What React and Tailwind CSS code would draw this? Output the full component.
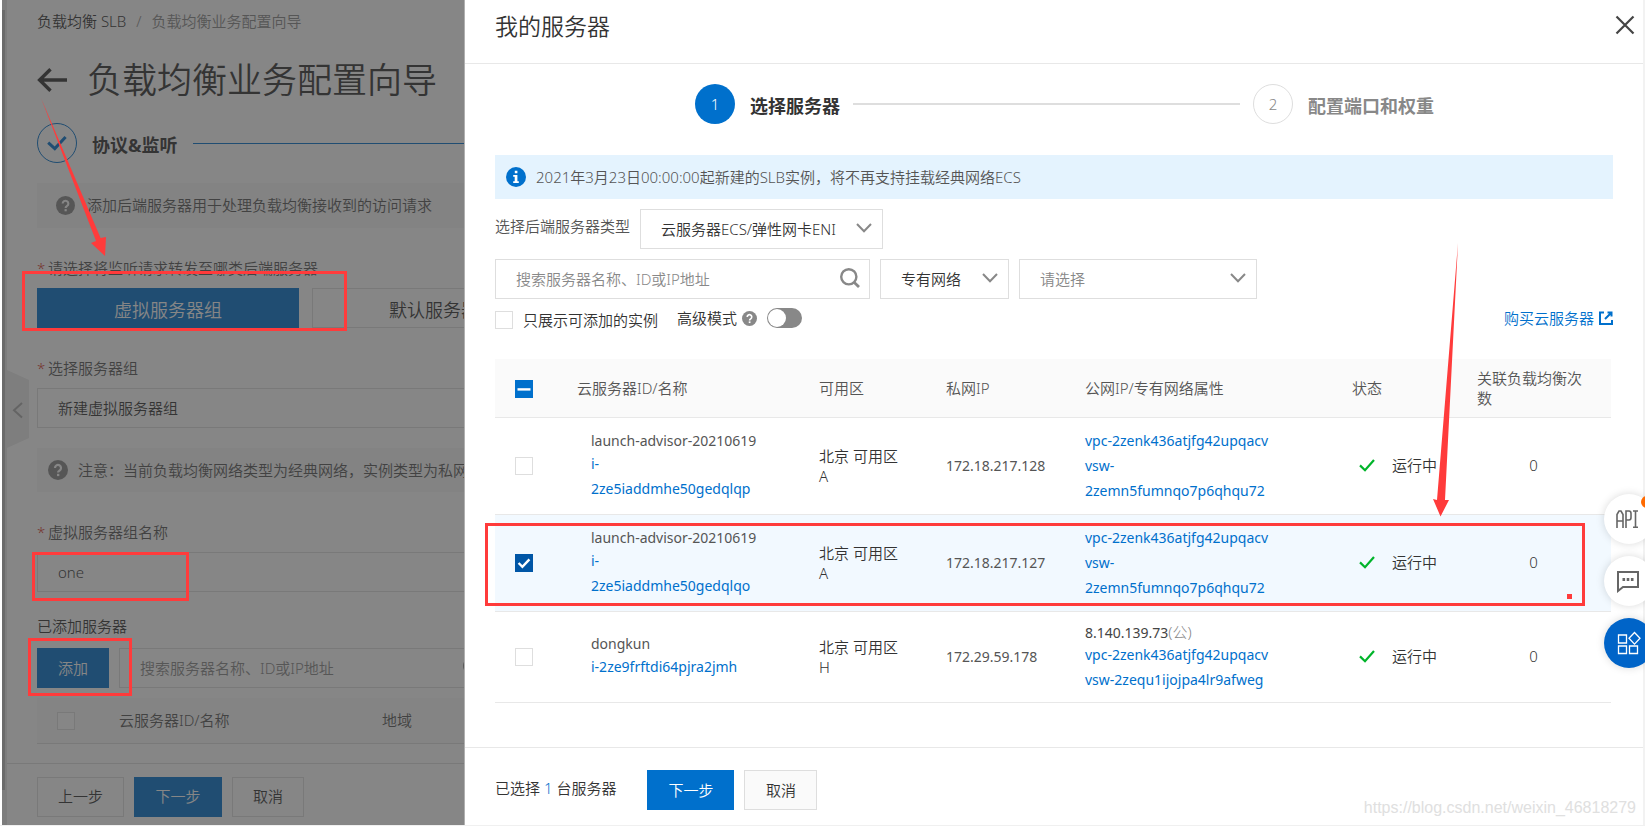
const servers = [
  {
    name: "launch-advisor-20210619",
    id: ["i-", "2ze5iaddmhe50gedqlqp"],
    zone: "北京 可用区 A",
    ip: "172.18.217.128",
    net: ["vpc-2zenk436atjfg42upqacv", "vsw-", "2zemn5fumnqo7p6qhqu72"],
    height: "h-[97px]",
  },
  {
    name: "launch-advisor-20210619",
    id: ["i-", "2ze5iaddmhe50gedqlqo"],
    zone: "北京 可用区 A",
    ip: "172.18.217.127",
    net: ["vpc-2zenk436atjfg42upqacv", "vsw-", "2zemn5fumnqo7p6qhqu72"],
    checked: true,
    height: "h-[97px]",
  },
  {
    name: "dongkun",
    id: ["i-2ze9frftdi64pjra2jmh"],
    zone: "北京 可用区 H",
    ip: "172.29.59.178",
    publicIp: "8.140.139.73",
    net: ["vpc-2zenk436atjfg42upqacv", "vsw-2zequ1ijojpa4lr9afweg"],
    height: "h-[91px]",
  },
];

function Chevron({ className }) {
  return (
    <svg viewBox="0 0 16 10" className={className} fill="none" stroke="#888" strokeWidth="2">
      <path d="M1 1l7 7.2L15 1" />
    </svg>
  );
}

function QuestionIcon({ className }) {
  return (
    <svg viewBox="0 0 20 20" className={className}>
      <circle cx="10" cy="10" r="10" fill="#888" />
      <path d="M7 8a3 3 0 1 1 4.6 2.5c-1 .7-1.5 1-1.5 2" fill="none" stroke="#fff" strokeWidth="2.2" />
      <rect x="9" y="13.8" width="2.3" height="2.3" fill="#fff" />
    </svg>
  );
}

function SearchIcon({ className }) {
  return (
    <svg viewBox="0 0 20 20" className={className} fill="none" stroke="#888" strokeWidth="2.4">
      <circle cx="8.8" cy="8.8" r="7.6" />
      <path d="M14 14.2l5 4.8" strokeWidth="2.8" />
    </svg>
  );
}

function Select({ id, className, value, muted }) {
  return (
    <span className={`relative inline-flex ${className}`}>
      <select
        id={id}
        aria-label={value}
        className={`h-10 w-full appearance-none border border-[#dedede] bg-white pl-5 pr-9 outline-none ${muted ? "text-[#888]" : "text-[#333]"}`}
      >
        <option>{value}</option>
      </select>
      <Chevron className="pointer-events-none absolute right-[11px] top-3.5 h-2.5 w-4" />
    </span>
  );
}

function Checkbox({ label, checked, mixed }) {
  return (
    <span className="relative inline-flex size-[18px]">
      <input
        type="checkbox"
        aria-label={label}
        defaultChecked={checked}
        className={`size-[18px] appearance-none border ${
          checked ? "border-[#0056a6] bg-[#0056a6]" : mixed ? "border-[#0070cc] bg-[#0070cc]" : "border-[#dedede] bg-white"
        }`}
      />
      {(checked || mixed) && (
        <svg viewBox="0 0 18 18" className="pointer-events-none absolute inset-0 size-[18px]" fill="none" stroke="#fff" strokeWidth="2.4">
          {mixed ? <path d="M2.5 9.4h13" /> : <path d="M3.6 9l3.8 3.8 7-7.4" />}
        </svg>
      )}
    </span>
  );
}

function RequiredLabel({ htmlFor, children, className }) {
  return (
    <label htmlFor={htmlFor} className={`flex h-5 items-center text-[#555] ${className}`}>
      <span className="w-[11px] text-[#d93026]">*</span>
      {children}
    </label>
  );
}

function Wizard() {
  return (
    <section className="relative flex w-[462px] shrink-0 overflow-hidden bg-white whitespace-nowrap">
      <div className="flex w-[5px] shrink-0 bg-[#e8e8e8]">
        <div className="mt-2.5 mb-[35px] w-[3px] bg-[#bbb]" />
      </div>
      <div className="flex w-[1200px] shrink-0 flex-col">
        <div className="flex flex-col pl-[30px]">
          <nav className="mt-[11px] flex h-5 items-center">
            <a href="#slb" className="text-[#333]">负载均衡 SLB</a>
            <span className="px-2.5 text-[#888]">/</span>
            <span className="text-[#888]">负载均衡业务配置向导</span>
          </nav>
          <div className="mt-[25px] flex h-12 items-center gap-5">
            <button aria-label="返回">
              <svg viewBox="0 0 30 24" className="h-6 w-[30px]" fill="none" stroke="#333" strokeWidth="3.4">
                <path d="M30 12H3M13.5 1.2L2.6 12l10.9 10.8" />
              </svg>
            </button>
            <h1 className="text-[35px] text-[#333]">负载均衡业务配置向导</h1>
          </div>
          <div className="mt-[19px] flex h-10 items-center gap-[15px]">
            <span className="flex size-10 items-center justify-center rounded-full border border-[#0070cc]">
              <svg viewBox="0 0 20 16" className="h-4 w-5" fill="none" stroke="#0070cc" strokeWidth="3">
                <path d="M1.2 7.6l6.6 6L18.6 2" />
              </svg>
            </span>
            <span className="pt-1 text-[18px] font-bold text-[#333]">协议&amp;监听</span>
            <span className="h-px flex-1 bg-[#0070cc]" />
          </div>
          <div className="mt-5 flex h-[45px] items-center gap-3 bg-[#f7f7f7] pl-[19px] text-[#555]">
            <QuestionIcon className="size-[19px]" />
            添加后端服务器用于处理负载均衡接收到的访问请求
          </div>
          <RequiredLabel className="mt-[30px]">请选择将监听请求转发至哪类后端服务器</RequiredLabel>
          <div className="mt-2.5 flex gap-[13px] text-[18px]">
            <button className="h-10 w-[262px] bg-[#0070cc] pt-1 text-white">虚拟服务器组</button>
            <button className="h-10 w-[262px] border border-[#dedede] pt-1 text-[#333]">默认服务器组</button>
          </div>
          <RequiredLabel htmlFor="group" className="mt-[30px]">选择服务器组</RequiredLabel>
          <Select id="group" className="mt-2.5 w-full" value="新建虚拟服务器组" />
          <div className="mt-5 flex h-11 items-center gap-2.5 bg-[#f7f7f7] pl-[11px] text-[#555]">
            <QuestionIcon className="size-5" />
            注意：当前负载均衡网络类型为经典网络，实例类型为私网
          </div>
          <RequiredLabel htmlFor="group-name" className="mt-[30px]">虚拟服务器组名称</RequiredLabel>
          <input id="group-name" defaultValue="one" className="mt-2.5 h-10 border border-[#dedede] px-5 text-[#333] outline-none" />
          <h2 className="mt-6 flex h-5 items-center text-[#333]">已添加服务器</h2>
          <div className="mt-3 flex gap-2.5">
            <button className="h-10 w-[72px] bg-[#0070cc] text-white">添加</button>
            <span className="relative flex w-[375px]">
              <input
                aria-label="搜索已添加服务器"
                placeholder="搜索服务器名称、ID或IP地址"
                className="h-10 w-full border border-[#dedede] px-5 outline-none placeholder:text-[#888]"
              />
              <SearchIcon className="absolute right-[11px] top-[9px] size-5" />
            </span>
          </div>
          <table className="mt-2.5 w-full table-fixed">
            <thead>
              <tr className="h-[45px] border-b border-[#dedede] bg-[#fafafa] text-left text-[#555]">
                <th className="w-[82px] pl-5 pt-1.5"><Checkbox label="全选已添加服务器" /></th>
                <th className="w-[263px] font-[350]">云服务器ID/名称</th>
                <th className="font-[350]">地域</th>
              </tr>
            </thead>
          </table>
        </div>
        <div className="mt-[19px] flex gap-2.5 border-t border-[#dedede] pt-[13px] pb-2 pl-[30px]">
          <button className="h-10 w-[87px] border border-[#dedede] text-[#333]">上一步</button>
          <button className="h-10 w-[88px] bg-[#0070cc] text-white">下一步</button>
          <button className="h-10 w-[72px] border border-[#dedede] text-[#333]">取消</button>
        </div>
      </div>
      <button aria-label="收起" className="absolute left-[5px] top-[370px] h-[78px] w-[22px]">
        <svg viewBox="0 0 22 78" className="size-full" fill="none">
          <path d="M0 0l22 10v58L0 78z" fill="#ebebeb" />
          <path d="M15 33l-8 7.3 8 7.3" stroke="#aaa" strokeWidth="2" />
        </svg>
      </button>
      <div className="pointer-events-none absolute inset-0 bg-[#353535]/60" />
    </section>
  );
}

function ServerTable() {
  return (
    <table className="mt-7 mr-0.5 table-fixed border-collapse text-left">
      <colgroup>
        <col className="w-[61px]" />
        <col className="w-[242px]" />
        <col className="w-[127px]" />
        <col className="w-[139px]" />
        <col className="w-[267px]" />
        <col className="w-[125px]" />
        <col className="w-[155px]" />
      </colgroup>
      <thead>
        <tr className="h-[58px] border-b border-[#e8e8e8] bg-[#fafafa] leading-5 text-[#555] *:font-[350]">
          <th className="pl-5 pt-1.5"><Checkbox label="全选" mixed /></th>
          <th className="px-[21px]">云服务器ID/名称</th>
          <th className="px-[21px]">可用区</th>
          <th className="px-[21px]">私网IP</th>
          <th className="px-[21px]">公网IP/专有网络属性</th>
          <th className="px-[21px]">状态</th>
          <th className="px-[21px]">关联负载均衡次数</th>
        </tr>
      </thead>
      <tbody className="text-[#333]">
        {servers.map((s) => (
          <tr key={s.ip} className={`border-b border-[#e8e8e8] ${s.height} ${s.checked ? "bg-[#f2f9ff]" : ""}`}>
            <td className="pl-5 pt-1.5"><Checkbox label={s.ip} checked={s.checked} /></td>
            <td className="pl-[35px] text-[14px] font-normal text-[#555]">
              <span className="block h-5 leading-5">{s.name}</span>
              <a href="#server" className="block leading-[25px] text-[#0070cc]">
                {s.id.map((part) => <span key={part} className="block">{part}</span>)}
              </a>
            </td>
            <td className="px-[21px] leading-5">{s.zone}</td>
            <td className="pl-[21px] text-[14px] font-normal whitespace-nowrap text-[#555]">{s.ip}</td>
            <td className="pl-[21px] text-[14px] font-normal text-[#0070cc]">
              {s.publicIp && (
                <span className="block h-5 leading-5 text-[#444]">
                  {s.publicIp}<span className="text-[15px] font-light text-[#888]">(公)</span>
                </span>
              )}
              {s.net.map((part) => <a key={part} href="#network" className="block leading-[25px]">{part}</a>)}
            </td>
            <td className="pl-7 whitespace-nowrap">
              <span className="flex items-center gap-[17px]">
                <svg viewBox="0 0 16 13" className="h-[13px] w-4" fill="none" stroke="#00b42a" strokeWidth="2.2">
                  <path d="M1 6.4l5 4.8L15 1" />
                </svg>
                运行中
              </span>
            </td>
            <td className="text-center">0</td>
          </tr>
        ))}
      </tbody>
    </table>
  );
}

function Drawer() {
  return (
    <section role="dialog" aria-label="我的服务器" className="flex flex-1 flex-col border-r-2 border-l border-r-[#f2f2f2] border-l-[#b0b0b0] bg-white">
      <header className="flex h-16 items-center justify-between border-b border-[#e8e8e8] pr-2 pb-2.5 pl-[30px]">
        <h2 className="text-[23px] text-[#333]">我的服务器</h2>
        <button aria-label="关闭" className="pb-1">
          <svg viewBox="0 0 20 20" className="size-5" fill="none" stroke="#444" strokeWidth="2.2">
            <path d="M1.5 1.5l17 17M18.5 1.5l-17 17" />
          </svg>
        </button>
      </header>
      <div className="flex flex-col px-[30px]">
        <ol className="mt-5 flex h-10 items-center gap-[13px] pr-[179px] pl-[200px] text-[18px]">
          <li className="flex items-center gap-[15px]">
            <span className="flex size-10 items-center justify-center rounded-full bg-[#0070cc] text-[15px] text-white">1</span>
            <span className="pt-1 font-bold text-[#333]">选择服务器</span>
          </li>
          <li aria-hidden="true" className="h-0.5 flex-1 bg-[#dedede]" />
          <li className="flex items-center gap-[15px]">
            <span className="flex size-10 items-center justify-center rounded-full border border-[#dedede] text-[15px] text-[#888]">2</span>
            <span className="pt-1 font-bold text-[#888]">配置端口和权重</span>
          </li>
        </ol>
        <p className="mt-[31px] flex h-11 items-center gap-2.5 bg-[#e4f3fe] pl-[11px] text-[#555]">
          <svg viewBox="0 0 20 20" className="size-5">
            <circle cx="10" cy="10" r="10" fill="#0070cc" />
            <path d="M8.8 3.8h2.6v2.4H8.8zM7.2 8h4.2v6.2h1.4v1.8H7.2v-1.8h1.5V9.8H7.2z" fill="#fff" />
          </svg>
          2021年3月23日00:00:00起新建的SLB实例，将不再支持挂载经典网络ECS
        </p>
        <div className="mt-2.5 flex gap-2.5">
          <label htmlFor="backend" className="pt-1.5 text-[#555]">选择后端服务器类型</label>
          <Select id="backend" className="w-[243px]" value="云服务器ECS/弹性网卡ENI" />
        </div>
        <div className="mt-2.5 flex gap-2.5">
          <span className="relative flex w-[375px]">
            <input
              aria-label="搜索服务器"
              placeholder="搜索服务器名称、ID或IP地址"
              className="h-10 w-full border border-[#dedede] px-5 outline-none placeholder:text-[#888]"
            />
            <SearchIcon className="absolute right-2.5 top-[9px] size-5" />
          </span>
          <Select className="w-[129px]" value="专有网络" />
          <Select className="w-[238px]" value="请选择" muted />
        </div>
        <div className="mt-2.5 flex h-[22px] items-center text-[#333]">
          <label className="flex items-center gap-2.5">
            <Checkbox label="只展示可添加的实例" />
            只展示可添加的实例
          </label>
          <span className="ml-[19px] flex items-center gap-[5px] pb-1">
            高级模式
            <QuestionIcon className="size-[15px]" />
            <button role="switch" aria-checked="false" aria-label="高级模式" className="ml-[5px] flex h-5 w-[35px] rounded-full bg-[#888] p-px">
              <span className="size-[18px] rounded-full bg-white" />
            </button>
          </span>
          <a href="#buy" className="ml-auto flex items-center gap-[5px] pb-1 text-[#0070cc]">
            购买云服务器
            <svg viewBox="0 0 14 14" className="size-3.5" fill="none" stroke="#0070cc" strokeWidth="2">
              <path d="M5 1.500H1V13h12V9M8.500 1.500h4v4M12 2L6 8" />
            </svg>
          </a>
        </div>
        <ServerTable />
      </div>
      <footer className="mt-auto flex h-[78px] gap-2.5 border-t border-[#e8e8e8] px-[30px] pt-[22px]">
        <span className="mr-[21px] pt-[7px] text-[#333]">
          已选择 <span className="text-[#0070cc]">1</span> 台服务器
        </span>
        <button className="h-10 w-[87px] bg-[#0070cc] text-white">下一步</button>
        <button className="h-10 w-[73px] border border-[#dedede] bg-[#fafafa] text-[#333]">取消</button>
      </footer>
    </section>
  );
}

function FloatingTools() {
  const base = "flex size-[50px] items-center justify-center rounded-full shadow-[0_0_8px_rgba(0,0,0,0.15)]";
  return (
    <div className="absolute top-[494px] right-[-9px] flex flex-col gap-3">
      <button aria-label="API" className={`relative bg-white ${base}`}>
        <svg viewBox="0 0 22 18" className="mr-1 h-[18px] w-[22px]" fill="none" stroke="#666" strokeWidth="1.6">
          <path d="M1 18V4.5L3 1h2l2 3.5V18M1 11h6M10 18V1h3q2 0 2 2.5v4q0 2.5-2 2.5h-3M17 1h5M17 17.2h5M19.5 1v16" />
        </svg>
        <span className="absolute top-[2px] right-[1px] size-3 rounded-full bg-[#ff6a00]" />
      </button>
      <button aria-label="咨询" className={`bg-white ${base}`}>
        <svg viewBox="0 0 24 24" className="mr-0.5 size-6" fill="none" stroke="#666" strokeWidth="2">
          <path d="M2 3h20v15H7l-5 4z" />
          <path d="M6.5 10.5h2.6M10.7 10.5h2.6M14.9 10.5h2.6" strokeWidth="2.8" />
        </svg>
      </button>
      <button aria-label="应用" className={`bg-[#0064c8] ${base}`}>
        <svg viewBox="0 0 24 24" className="size-6" fill="none" stroke="#fff" strokeWidth="1.3">
          <path d="M1.5 4h8v8h-8zM1.5 15h8v7.5h-8zM12.5 15h8v7.5h-8zM17.5 1.5l5.5 5.8-5.5 5.8L12 7.3z" />
        </svg>
      </button>
    </div>
  );
}

function Annotations() {
  return (
    <svg viewBox="0 0 1645 826" className="pointer-events-none absolute top-0 left-0 h-[826px] w-[1645px]">
      <g fill="none" stroke="#ff3b3b" strokeWidth="3">
        <path d="M23.5 272.5h322v57h-322z" />
        <path d="M33.5 553.5h154v46h-154z" />
        <path d="M29.5 639.5h101v55h-101z" />
        <path d="M486.5 524.5h1097v80h-1097z" />
      </g>
      <g fill="#ff3b3b">
        <path d="M41 98L100.6 238 106 237 105 256 91 243 96 241z" />
        <path d="M1458 243L1445 500h4l-8.5 16.5L1433 499l4 1z" />
        <rect x="1567" y="594" width="5" height="5" />
      </g>
    </svg>
  );
}

export default function App() {
  return (
    <main className="relative flex min-h-screen flex-col overflow-hidden bg-[#f0f0f0] font-['Noto_Sans','Noto_Sans_CJK_SC',sans-serif] text-[15px] font-[350]">
      <div className="flex flex-1 pb-px">
        <div className="w-0.5 shrink-0 bg-white" />
        <Wizard />
        <Drawer />
      </div>
      <FloatingTools />
      <span className="absolute right-[9px] bottom-1.5 font-['Liberation_Sans',sans-serif] text-[16px] font-normal text-[#e0e0e0]">
        https://blog.csdn.net/weixin_46818279
      </span>
      <Annotations />
    </main>
  );
}
